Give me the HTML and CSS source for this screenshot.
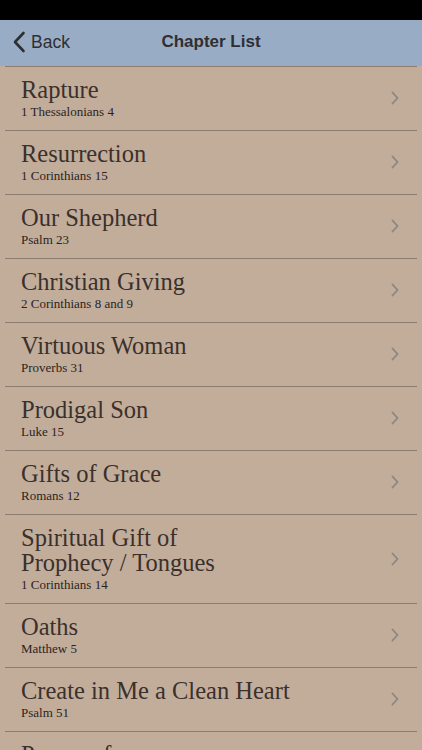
FILE: index.html
```html
<!DOCTYPE html>
<html lang="en">
<head>
  <meta charset="UTF-8">
  <meta name="viewport" content="width=device-width, initial-scale=1.0">
  <title>Chapter List</title>
  <link rel="stylesheet" href="styles.css">
</head>
<body>
  <div class="status-bar"></div>

  <nav class="navbar">
    <a class="back-link" href="#">
      <svg class="back-icon" width="14" height="22" viewBox="0 0 14 22">
        <path d="M11.5 2 L3 11 L11.5 20" fill="none" stroke="#2f2f33" stroke-width="2.6" stroke-linecap="round" stroke-linejoin="round"/>
      </svg>
      Back
    </a>
    <h1>Chapter List</h1>
  </nav>

  <ul class="chapter-list">
    <li><a class="row" href="#">
      <div class="row-text"><span class="title">Rapture</span><span class="ref">1 Thessalonians 4</span></div>
      <svg class="chevron" width="8" height="14" viewBox="0 0 8 14"><path d="M1.5 1.5 L6.5 7 L1.5 12.5" /></svg>
    </a></li>
    <li><a class="row" href="#">
      <div class="row-text"><span class="title">Resurrection</span><span class="ref">1 Corinthians 15</span></div>
      <svg class="chevron" width="8" height="14" viewBox="0 0 8 14"><path d="M1.5 1.5 L6.5 7 L1.5 12.5" /></svg>
    </a></li>
    <li><a class="row" href="#">
      <div class="row-text"><span class="title">Our Shepherd</span><span class="ref">Psalm 23</span></div>
      <svg class="chevron" width="8" height="14" viewBox="0 0 8 14"><path d="M1.5 1.5 L6.5 7 L1.5 12.5" /></svg>
    </a></li>
    <li><a class="row" href="#">
      <div class="row-text"><span class="title">Christian Giving</span><span class="ref">2 Corinthians 8 and 9</span></div>
      <svg class="chevron" width="8" height="14" viewBox="0 0 8 14"><path d="M1.5 1.5 L6.5 7 L1.5 12.5" /></svg>
    </a></li>
    <li><a class="row" href="#">
      <div class="row-text"><span class="title">Virtuous Woman</span><span class="ref">Proverbs 31</span></div>
      <svg class="chevron" width="8" height="14" viewBox="0 0 8 14"><path d="M1.5 1.5 L6.5 7 L1.5 12.5" /></svg>
    </a></li>
    <li><a class="row" href="#">
      <div class="row-text"><span class="title">Prodigal Son</span><span class="ref">Luke 15</span></div>
      <svg class="chevron" width="8" height="14" viewBox="0 0 8 14"><path d="M1.5 1.5 L6.5 7 L1.5 12.5" /></svg>
    </a></li>
    <li><a class="row" href="#">
      <div class="row-text"><span class="title">Gifts of Grace</span><span class="ref">Romans 12</span></div>
      <svg class="chevron" width="8" height="14" viewBox="0 0 8 14"><path d="M1.5 1.5 L6.5 7 L1.5 12.5" /></svg>
    </a></li>
    <li><a class="row" href="#">
      <div class="row-text"><span class="title">Spiritual Gift of<br>Prophecy / Tongues</span><span class="ref">1 Corinthians 14</span></div>
      <svg class="chevron" width="8" height="14" viewBox="0 0 8 14"><path d="M1.5 1.5 L6.5 7 L1.5 12.5" /></svg>
    </a></li>
    <li><a class="row" href="#">
      <div class="row-text"><span class="title">Oaths</span><span class="ref">Matthew 5</span></div>
      <svg class="chevron" width="8" height="14" viewBox="0 0 8 14"><path d="M1.5 1.5 L6.5 7 L1.5 12.5" /></svg>
    </a></li>
    <li><a class="row" href="#">
      <div class="row-text"><span class="title">Create in Me a Clean Heart</span><span class="ref">Psalm 51</span></div>
      <svg class="chevron" width="8" height="14" viewBox="0 0 8 14"><path d="M1.5 1.5 L6.5 7 L1.5 12.5" /></svg>
    </a></li>
    <li><a class="row" href="#">
      <div class="row-text"><span class="title">Prayer of</span><span class="ref">Matthew 6</span></div>
      <svg class="chevron" width="8" height="14" viewBox="0 0 8 14"><path d="M1.5 1.5 L6.5 7 L1.5 12.5" /></svg>
    </a></li>
  </ul>
</body>
</html>
```

FILE: styles.css
```css
body {
  margin: 0;
  padding: 0;
  background-color: #c2ad9b;
  font-family: "Liberation Serif", serif;
  color: #3b302b;
  height: 750px;
  overflow: hidden;
}

.status-bar {
  height: 20px;
  background: #000;
}

.navbar {
  position: relative;
  height: 46px;
  background-color: #98adc5;
  display: flex;
  align-items: center;
  justify-content: center;
  font-family: "Liberation Sans", Arial, sans-serif;
  color: #2f2f33;
}

.navbar h1 {
  margin: 0 0 2px;
  font-size: 17px;
  font-weight: bold;
}

.back-link {
  position: absolute;
  left: 12px;
  top: 0;
  height: 44px;
  display: flex;
  align-items: center;
  gap: 5px;
  font-size: 17.5px;
  color: #2f2f33;
  text-decoration: none;
}

.chapter-list {
  list-style: none;
  padding: 0;
  border-top: 1px solid #8c7d70;
  margin: 0 5px;
}

.row {
  display: flex;
  align-items: center;
  justify-content: space-between;
  padding: 10px 18px 11px 16px;
  border-bottom: 1px solid #8c7d70;
  color: inherit;
  text-decoration: none;
}

.row-text {
  display: flex;
  flex-direction: column;
}

.title {
  font-size: 24.5px;
  line-height: 25px;
}

.ref {
  margin-top: 2px;
  font-size: 13px;
  line-height: 15px;
  color: #2c2320;
}

.chevron path {
  fill: none;
  stroke: #8b8682;
  stroke-width: 1.8;
  stroke-linecap: round;
  stroke-linejoin: round;
}
```
